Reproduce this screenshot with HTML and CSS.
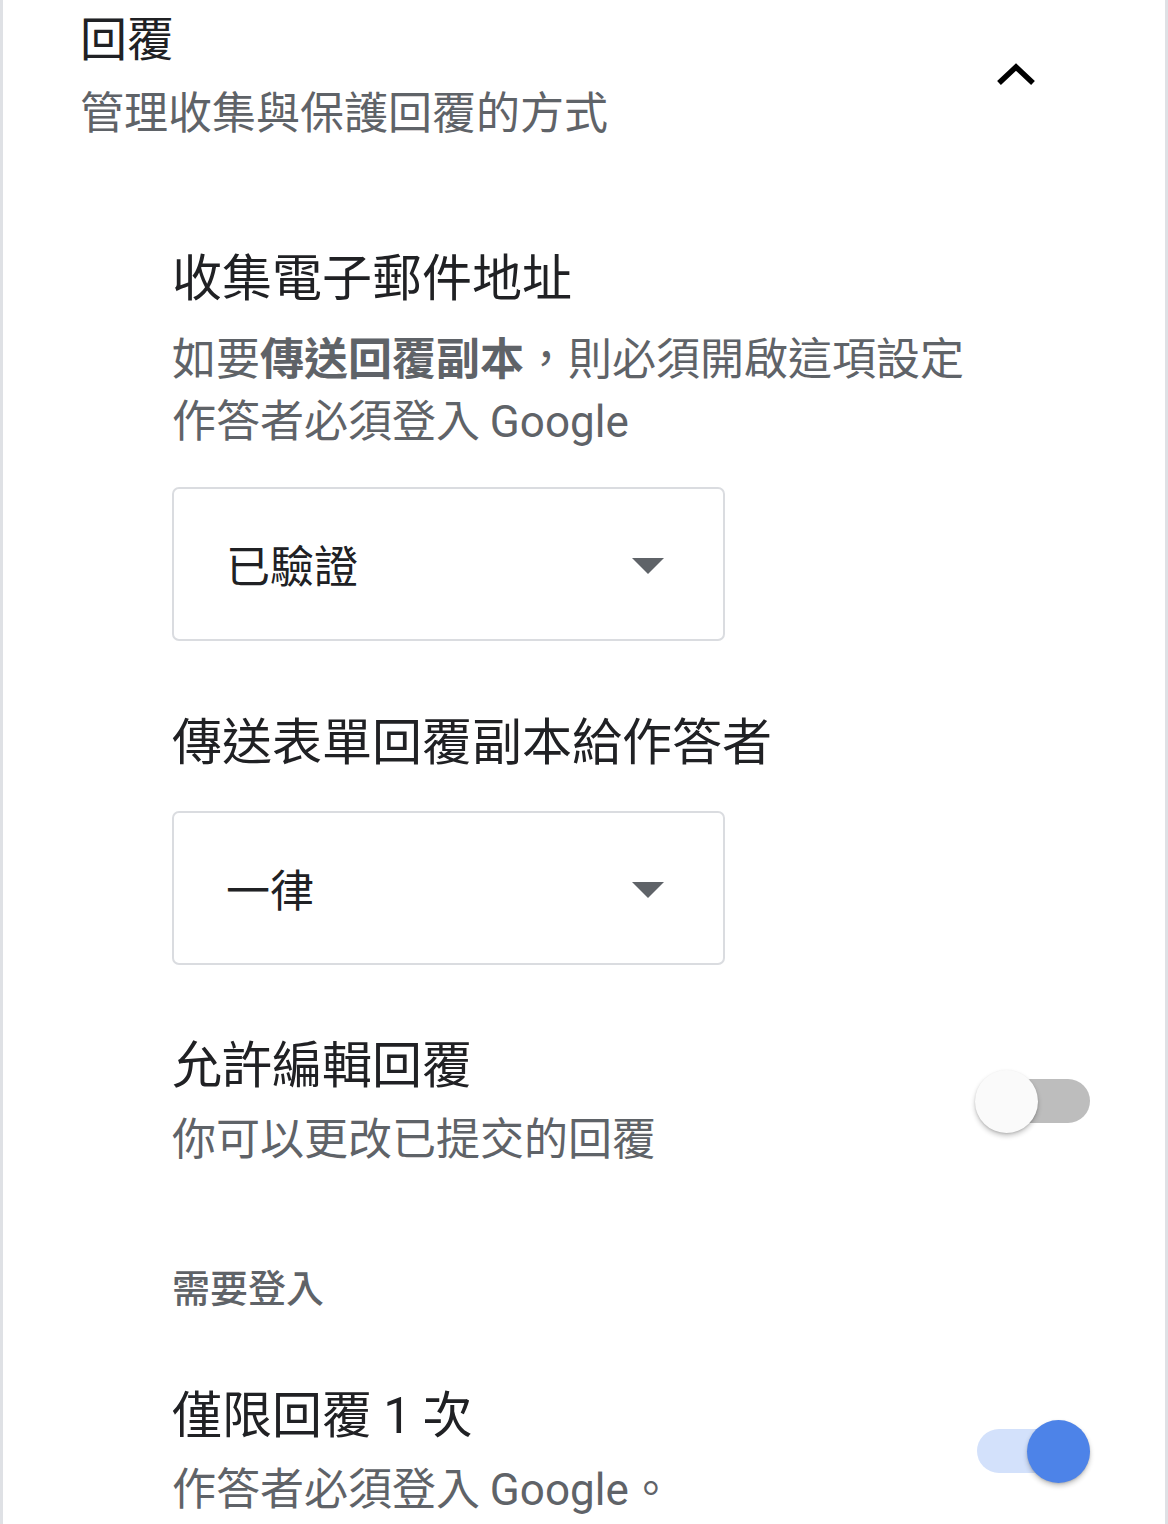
FILE: index.html
```html
<!DOCTYPE html>
<html lang="zh-Hant">
<head>
<meta charset="utf-8">
<link rel="stylesheet" href="styles.css">
</head>
<body>
<div class="panel">
  <header class="header">
    <div class="header-text">
      <div class="title">回覆</div>
      <div class="subtitle">管理收集與保護回覆的方式</div>
    </div>
    <svg class="chevron" viewBox="0 0 40 24" width="40" height="24" aria-hidden="true">
      <polyline points="3,20 20,4 37,20" fill="none" stroke="#000" stroke-width="5.5" stroke-linejoin="miter"/>
    </svg>
  </header>

  <section class="content">
    <div class="setting setting-email">
      <div class="heading">收集電子郵件地址</div>
      <div class="desc desc-first">如要<b>傳送回覆副本</b>，則必須開啟這項設定</div>
      <div class="desc">作答者必須登入 <span class="latin">Google</span></div>
      <div class="select">
        <span class="select-text">已驗證</span>
        <span class="caret"></span>
      </div>
    </div>

    <div class="setting setting-copy">
      <div class="heading">傳送表單回覆副本給作答者</div>
      <div class="select">
        <span class="select-text">一律</span>
        <span class="caret"></span>
      </div>
    </div>

    <div class="toggle-row row-edit">
      <div class="toggle-text">
        <div class="heading">允許編輯回覆</div>
        <div class="desc desc-first-tight">你可以更改已提交的回覆</div>
      </div>
      <div class="switch">
        <span class="track"></span>
        <span class="knob"></span>
      </div>
    </div>

    <div class="group-label">需要登入</div>

    <div class="toggle-row row-once">
      <div class="toggle-text">
        <div class="heading">僅限回覆 <span class="latin">1</span> 次</div>
        <div class="desc desc-first-tight">作答者必須登入 <span class="latin">Google</span>。</div>
      </div>
      <div class="switch on">
        <span class="track"></span>
        <span class="knob"></span>
      </div>
    </div>
  </section>
</div>
</body>
</html>
```

FILE: styles.css
```css
html, body {
  margin: 0;
  padding: 0;
  background: #ffffff;
}

body {
  font-family: "Noto Sans CJK TC", Roboto, sans-serif;
  color: #202124;
}

.latin {
  font-family: Roboto, "Noto Sans CJK TC", sans-serif;
  line-height: 1;
}

.panel {
  box-sizing: border-box;
  width: 1168px;
  height: 1524px;
  border-left: 3px solid #dfe1e5;
  border-right: 3px solid #dfe1e5;
  overflow: hidden;
}

.header {
  display: flex;
  align-items: flex-start;
  justify-content: space-between;
  padding: 8px 0 0 77px;
}

.title {
  font-size: 47px;
  line-height: 56px;
  color: #202124;
}

.subtitle {
  margin-top: 18px;
  font-size: 44px;
  line-height: 56px;
  color: #5f6368;
}

.chevron {
  width: 40px;
  height: 24px;
  margin: 55px 129px 0 0;
}

.content {
  padding: 0 75px 0 169px;
}

.heading {
  font-size: 50px;
  line-height: 60px;
  color: #202124;
}

.desc {
  font-size: 44px;
  line-height: 62px;
  color: #5f6368;
}

.desc b {
  font-weight: 700;
  color: #5f6368;
}

.desc-first {
  margin-top: 21px;
}

.desc-first-tight {
  margin-top: 14px;
}

.setting-email {
  padding-top: 106px;
}

.select {
  box-sizing: border-box;
  width: 553px;
  height: 154px;
  border: 2px solid #dadce0;
  border-radius: 7px;
  display: flex;
  align-items: center;
  justify-content: space-between;
  padding: 0 59px 0 52px;
}

.setting-email .select {
  margin-top: 38px;
}

.select-text {
  font-size: 44px;
  line-height: 52px;
  color: #202124;
}

.caret {
  width: 0;
  height: 0;
  border-left: 16px solid transparent;
  border-right: 16px solid transparent;
  border-top: 16px solid #5f6368;
  margin-top: 4px;
}

.setting-copy {
  margin-top: 67px;
}

.setting-copy .select {
  margin-top: 43px;
}

.toggle-row {
  display: flex;
  align-items: center;
  justify-content: space-between;
}

.row-edit {
  margin-top: 66px;
}

.group-label {
  margin-top: 96px;
  font-size: 38px;
  line-height: 46px;
  font-weight: 500;
  color: #5f6368;
}

.row-once {
  margin-top: 72px;
}

.switch {
  position: relative;
  width: 116px;
  height: 62px;
  margin-top: 4px;
}

.track {
  position: absolute;
  left: 3px;
  right: 0;
  top: 9px;
  height: 44px;
  border-radius: 22px;
  background: #bdbdbd;
}

.knob {
  position: absolute;
  left: 1px;
  top: 0;
  width: 63px;
  height: 63px;
  border-radius: 50%;
  background: #fafafa;
  box-shadow: 0 3px 5px rgba(0, 0, 0, 0.22), 0 1px 2px rgba(0, 0, 0, 0.12);
}

.switch.on .track {
  background: #d3e1fb;
}

.switch.on .knob {
  left: 53px;
  background: #4d83e8;
}
```
